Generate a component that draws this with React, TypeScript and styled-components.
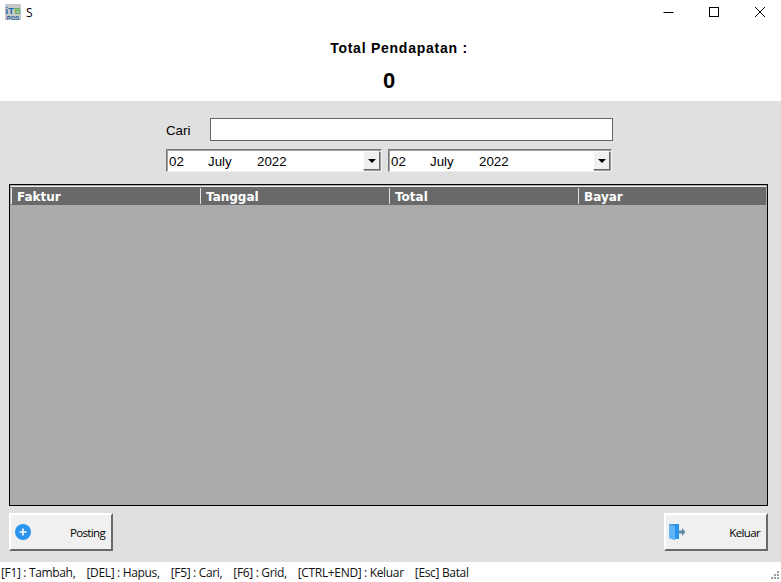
import styled, { createGlobalStyle } from 'styled-components'

const Global = createGlobalStyle`
	html, body { margin: 0; padding: 0; background: #fff; }
	body { font-family: "Liberation Sans", Arial, sans-serif; }
`

const Win = styled.div`
	width: 781px;
	height: 582px;
	display: flex;
	flex-direction: column;
	overflow: hidden;
	background: #fff;
`

const TitleBar = styled.div`
	height: 24px;
	display: flex;
	align-items: center;
	padding-left: 5px;
	margin-right: -2px;
	flex-shrink: 0;
`

const AppName = styled.span`
	font: 12px "Open Sans", sans-serif;
	color: #000;
	margin-left: 5px;
	flex: 1;
`

const WinBtn = styled.div`
	width: 46px;
	height: 24px;
	display: flex;
	align-items: center;
	justify-content: center;
`

const Head = styled.div`
	height: 77px;
	flex-shrink: 0;
	display: flex;
	flex-direction: column;
	align-items: center;
	font-weight: bold;
	color: #000;
	box-sizing: border-box;
`

const HeadLabel = styled.div`
	font-size: 14px;
	line-height: 16px;
	margin-top: 16px;
	margin-left: 17px;
	letter-spacing: 0.75px;
`

const HeadValue = styled.div`
	font-size: 22px;
	line-height: 26px;
	margin-top: 12px;
	margin-left: -3px;
`

const Body = styled.div`
	flex: 1;
	background: #e0e0e0;
	display: flex;
	flex-direction: column;
	padding: 17px 13px 10px 9px;
`

const SearchRow = styled.div`
	display: flex;
	align-items: center;
	padding-left: 157px;
	height: 23px;
`

const SearchLabel = styled.label`
	width: 44px;
	font-size: 13.3px;
	color: #000;
	padding-top: 1px;
`

const SearchInput = styled.div`
	width: 403px;
	height: 23px;
	box-sizing: border-box;
	background: #fff;
	border: 1px solid #646464;
`

const DateRow = styled.div`
	display: flex;
	gap: 6px;
	padding-left: 157px;
	margin-top: 8px;
	height: 23px;
`

const DateBox = styled.div<{ $w: number }>`
	width: ${p => p.$w}px;
	height: 23px;
	box-sizing: border-box;
	background: #fff;
	border: 1px solid;
	border-color: #767676 #f0f0f0 #f0f0f0 #767676;
	box-shadow: inset 1px 1px 0 #a0a0a0;
	display: flex;
	align-items: center;
	font-size: 13.3px;
	color: #000;
	padding: 0 1px 0 2px;
`

const DatePart = styled.span<{ $w: number }>`
	width: ${p => p.$w}px;
	flex-shrink: 0;
	padding-top: 1px;
`

const Spin = styled.div`
	margin-left: auto;
	width: 17px;
	height: 19px;
	box-sizing: border-box;
	background: #f0f0f0;
	border: 1px solid;
	border-color: #fff #696969 #696969 #fff;
	box-shadow: 1px 1px 0 #a0a0a0;
	display: flex;
	align-items: center;
	justify-content: center;
	&::after {
		content: '';
		border-left: 4px solid transparent;
		border-right: 4px solid transparent;
		border-top: 4px solid #000;
	}
`

const Grid = styled.div`
	margin-top: 12px;
	height: 322px;
	box-sizing: border-box;
	background: #ababab;
	border: 1px solid #000;
	padding: 1px 1px 0 1px;
`

const GridHead = styled.div`
	height: 18px;
	background: #696969;
	border-top: 1px solid #ececec;
	display: grid;
	grid-template-columns: 189px 189px 189px 1fr;
`

const GridCol = styled.div`
	font: bold 12px "DejaVu Sans", Verdana, sans-serif;
	color: #fff;
	line-height: 18px;
	padding-left: 6px;
	box-shadow: inset 1px 0 0 #e4e4e4;
	margin: 1px 0 0;
	height: 16px;
`

const Footer = styled.div`
	display: flex;
	justify-content: space-between;
	margin-top: 7px;
`

const ActionBtn = styled.div`
	width: 104px;
	height: 38px;
	box-sizing: border-box;
	background: #f0f0f0;
	border: 2px solid;
	border-color: #fff #696969 #696969 #fff;
	display: flex;
	align-items: center;
	justify-content: space-between;
	padding: 0 6px 0 3px;
	font: 11.5px "Open Sans", sans-serif;
	letter-spacing: -0.65px;
	color: #000;
`

const StatusBar = styled.div`
	height: 20px;
	flex-shrink: 0;
	position: relative;
	display: flex;
	align-items: center;
	padding-left: 1px;
	font: 12px "Open Sans", sans-serif;
	letter-spacing: -0.34px;
	color: #111;
	white-space: pre;
`

const Grip = styled.svg`
	position: absolute;
	right: 1px;
	bottom: 2px;
`

function AppIcon() {
	return (
		<svg width="16" height="16" viewBox="0 0 16 16">
			<rect width="16" height="16" fill="#c6c9cc" />
			<text x="0.500" y="9.500" fontFamily="Liberation Sans" fontWeight="bold" fontSize="9.500" fill="#1f66a8">iT</text>
			<text x="9.500" y="9.500" fontFamily="Liberation Sans" fontWeight="bold" fontSize="8.500" fill="#5cae46">B</text>
			<text x="8" y="15.500" textAnchor="middle" fontFamily="Liberation Sans" fontWeight="bold" fontSize="6" fill="#1f5c9c">POS</text>
		</svg>
	)
}

function PlusIcon() {
	return (
		<svg width="18" height="18" viewBox="0 0 18 18">
			<circle cx="9" cy="9" r="8" fill="#2b95ee" />
			<path d="M9 5.500v7M5.500 9h7" stroke="#fff" strokeWidth="1.6" />
		</svg>
	)
}

function ExitIcon() {
	return (
		<svg width="18" height="18" viewBox="0 0 18 18">
			<path d="M0 1h10v15H6v1L0 15z" fill="#2b95ee" />
			<path d="M0 1l6 2v14l-6-2z" fill="#62b4f6" />
			<path d="M10 7.500h3V5l3.500 4-3.500 4v-2.500h-3z" fill="#5d8aa0" />
		</svg>
	)
}

function DatePicker({ w }: { w: number }) {
	return (
		<DateBox $w={w}>
			<DatePart $w={39}>02</DatePart>
			<DatePart $w={49}>July</DatePart>
			<DatePart $w={40}>2022</DatePart>
			<Spin />
		</DateBox>
	)
}

export default function App() {
	return (
		<Win>
			<Global />
			<TitleBar>
				<AppIcon />
				<AppName>S</AppName>
				<WinBtn>
					<svg width="12" height="12"><path d="M1.500 6.500h10" stroke="#000" /></svg>
				</WinBtn>
				<WinBtn>
					<svg width="12" height="12"><rect x="1.500" y="1.500" width="9" height="9" fill="none" stroke="#000" /></svg>
				</WinBtn>
				<WinBtn>
					<svg width="12" height="12"><path d="M1 1l10 10M11 1L1 11" stroke="#000" /></svg>
				</WinBtn>
			</TitleBar>
			<Head>
				<HeadLabel>Total Pendapatan :</HeadLabel>
				<HeadValue>0</HeadValue>
			</Head>
			<Body>
				<SearchRow>
					<SearchLabel>Cari</SearchLabel>
					<SearchInput />
				</SearchRow>
				<DateRow>
					<DatePicker w={216} />
					<DatePicker w={224} />
				</DateRow>
				<Grid>
					<GridHead>
						<GridCol>Faktur</GridCol>
						<GridCol>Tanggal</GridCol>
						<GridCol>Total</GridCol>
						<GridCol>Bayar</GridCol>
					</GridHead>
				</Grid>
				<Footer>
					<ActionBtn><PlusIcon />Posting</ActionBtn>
					<ActionBtn><ExitIcon />Keluar</ActionBtn>
				</Footer>
			</Body>
			<StatusBar>
				{'[F1] : Tambah,    [DEL] : Hapus,    [F5] : Cari,    [F6] : Grid,    [CTRL+END] : Keluar    [Esc] Batal'}
				<Grip width="10" height="10" viewBox="0 0 10 10" fill="#a0a0a0">
					<rect x="7" y="1" width="2" height="2" />
					<rect x="4" y="4" width="2" height="2" />
					<rect x="7" y="4" width="2" height="2" />
					<rect x="1" y="7" width="2" height="2" />
					<rect x="4" y="7" width="2" height="2" />
					<rect x="7" y="7" width="2" height="2" />
				</Grip>
			</StatusBar>
		</Win>
	)
}
